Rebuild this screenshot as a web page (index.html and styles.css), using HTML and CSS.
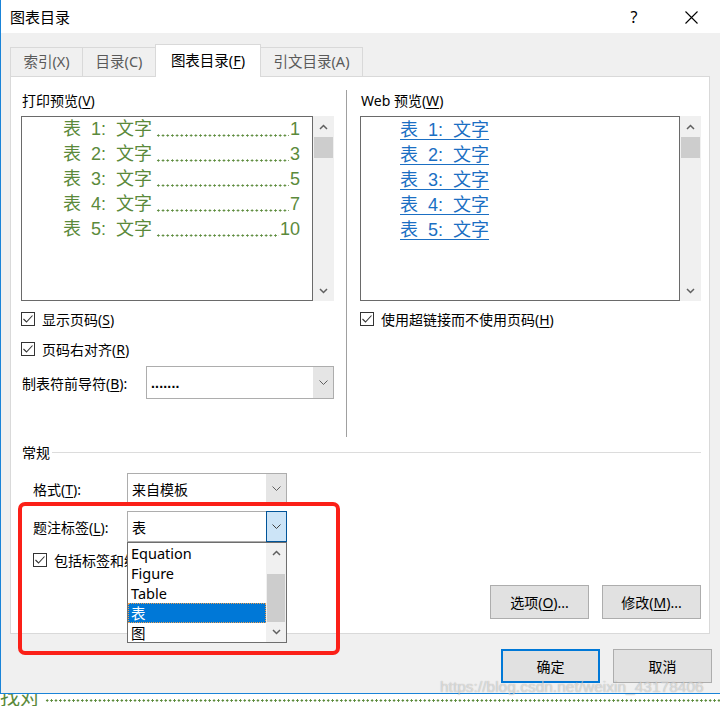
FILE: index.html
```html
<!DOCTYPE html>
<html lang="zh-CN">
<head>
<meta charset="utf-8">
<title>图表目录</title>
<link rel="stylesheet" href="styles.css">
</head>
<body>
<div class="window">
  <div class="titlebar">
    <span class="title">图表目录</span>
    <span class="help">?</span>
    <span class="close"><svg width="13" height="13" viewBox="0 0 13 13"><path d="M0.5 0.5L12.5 12.5M12.5 0.5L0.5 12.5" stroke="#000" stroke-width="1.1" fill="none"/></svg></span>
  </div>
  <div class="body">
    <div class="tabs">
      <div class="tab t1">索引(X)</div>
      <div class="tab t2">目录(C)</div>
      <div class="tab t3 active">图表目录(<u>F</u>)</div>
      <div class="tab t4">引文目录(A)</div>
    </div>
    <div class="panel">
      <div class="top">
        <div class="col col-left">
          <div class="label">打印预览(<u>V</u>)</div>
          <div class="preview">
            <div class="preview-box print">
              <div class="pline"><span class="ptext">表&nbsp;&nbsp;1:&nbsp;&nbsp;文字</span><span class="leader"></span><span class="pnum">1</span></div>
              <div class="pline"><span class="ptext">表&nbsp;&nbsp;2:&nbsp;&nbsp;文字</span><span class="leader"></span><span class="pnum">3</span></div>
              <div class="pline"><span class="ptext">表&nbsp;&nbsp;3:&nbsp;&nbsp;文字</span><span class="leader"></span><span class="pnum">5</span></div>
              <div class="pline"><span class="ptext">表&nbsp;&nbsp;4:&nbsp;&nbsp;文字</span><span class="leader"></span><span class="pnum">7</span></div>
              <div class="pline"><span class="ptext">表&nbsp;&nbsp;5:&nbsp;&nbsp;文字</span><span class="leader"></span><span class="pnum">10</span></div>
            </div>
            <div class="vscroll">
              <div class="arrow"><svg width="9" height="6" viewBox="0 0 9 6"><path d="M1 5L4.5 1.5L8 5" stroke="#606060" stroke-width="1.5" fill="none"/></svg></div>
              <div class="thumb"></div>
              <div class="track"></div>
              <div class="arrow"><svg width="9" height="6" viewBox="0 0 9 6"><path d="M1 1L4.5 4.5L8 1" stroke="#606060" stroke-width="1.5" fill="none"/></svg></div>
            </div>
          </div>
          <div class="check first"><span class="box"><svg width="12" height="12" viewBox="0 0 12 12"><path d="M1.5 6L4.5 9L10.5 2.5" stroke="#333" stroke-width="1.1" fill="none"/></svg></span><span>显示页码(<u>S</u>)</span></div>
          <div class="check second"><span class="box"><svg width="12" height="12" viewBox="0 0 12 12"><path d="M1.5 6L4.5 9L10.5 2.5" stroke="#333" stroke-width="1.1" fill="none"/></svg></span><span>页码右对齐(<u>R</u>)</span></div>
          <div class="field">
            <span class="field-label">制表符前导符(<u>B</u>):</span>
            <div class="combo wide">
              <span class="combo-text dots">.......</span>
              <span class="combo-btn"><svg width="9" height="5" viewBox="0 0 9 5"><path d="M0.5 0.5L4.5 4.5L8.5 0.5" stroke="#606060" stroke-width="1" fill="none"/></svg></span>
            </div>
          </div>
        </div>
        <div class="sep"></div>
        <div class="col col-right">
          <div class="label">Web 预览(<u>W</u>)</div>
          <div class="preview">
            <div class="preview-box web">
              <div class="wline"><a class="wlink">表&nbsp;&nbsp;1:&nbsp;&nbsp;文字</a></div>
              <div class="wline"><a class="wlink">表&nbsp;&nbsp;2:&nbsp;&nbsp;文字</a></div>
              <div class="wline"><a class="wlink">表&nbsp;&nbsp;3:&nbsp;&nbsp;文字</a></div>
              <div class="wline"><a class="wlink">表&nbsp;&nbsp;4:&nbsp;&nbsp;文字</a></div>
              <div class="wline"><a class="wlink">表&nbsp;&nbsp;5:&nbsp;&nbsp;文字</a></div>
            </div>
            <div class="vscroll">
              <div class="arrow"><svg width="9" height="6" viewBox="0 0 9 6"><path d="M1 5L4.5 1.5L8 5" stroke="#606060" stroke-width="1.5" fill="none"/></svg></div>
              <div class="thumb"></div>
              <div class="track"></div>
              <div class="arrow"><svg width="9" height="6" viewBox="0 0 9 6"><path d="M1 1L4.5 4.5L8 1" stroke="#606060" stroke-width="1.5" fill="none"/></svg></div>
            </div>
          </div>
          <div class="check first"><span class="box"><svg width="12" height="12" viewBox="0 0 12 12"><path d="M1.5 6L4.5 9L10.5 2.5" stroke="#333" stroke-width="1.1" fill="none"/></svg></span><span>使用超链接而不使用页码(<u>H</u>)</span></div>
        </div>
      </div>
      <div class="general">
        <div class="group-head"><span>常规</span><span class="group-line"></span></div>
        <div class="frow format-row">
          <span class="frow-label">格式(<u>T</u>):</span>
          <div class="combo narrow">
            <span class="combo-text">来自模板</span>
            <span class="combo-btn"><svg width="9" height="5" viewBox="0 0 9 5"><path d="M0.5 0.5L4.5 4.5L8.5 0.5" stroke="#606060" stroke-width="1" fill="none"/></svg></span>
          </div>
        </div>
        <div class="frow caption-row">
          <span class="frow-label">题注标签(<u>L</u>):</span>
          <div class="combo narrow">
            <span class="combo-text">表</span>
            <span class="combo-btn hot"><svg width="9" height="5" viewBox="0 0 9 5"><path d="M0.5 0.5L4.5 4.5L8.5 0.5" stroke="#404040" stroke-width="1" fill="none"/></svg></span>
            <div class="droplist">
              <div class="items">
                <div class="item">Equation</div>
                <div class="item">Figure</div>
                <div class="item">Table</div>
                <div class="item selected">表</div>
                <div class="item">图</div>
              </div>
              <div class="lscroll">
                <div class="larrow"><svg width="9" height="6" viewBox="0 0 9 6"><path d="M1 5L4.5 1.5L8 5" stroke="#606060" stroke-width="1.5" fill="none"/></svg></div>
                <div class="ltrack"></div>
                <div class="lthumb"></div>
                <div class="larrow"><svg width="9" height="6" viewBox="0 0 9 6"><path d="M1 1L4.5 4.5L8 1" stroke="#606060" stroke-width="1.5" fill="none"/></svg></div>
              </div>
            </div>
          </div>
        </div>
        <div class="check incl"><span class="box"><svg width="12" height="12" viewBox="0 0 12 12"><path d="M1.5 6L4.5 9L10.5 2.5" stroke="#333" stroke-width="1.1" fill="none"/></svg></span><span>包括标签和编号(<u>N</u>)</span></div>
        <div class="btn-row">
          <div class="btn">选项(<u>O</u>)...</div>
          <div class="btn">修改(<u>M</u>)...</div>
        </div>
      </div>
    </div>
    <div class="footer">
      <div class="btn primary">确定</div>
      <div class="btn">取消</div>
    </div>
  </div>
</div>
<div class="below"><span class="below-text">找对</span><span class="below-dots"></span></div>
<div class="annot"></div>
<div class="watermark">https://blog.csdn.net/weixin_43178406</div>
</body>
</html>
```

FILE: styles.css
```css
* { box-sizing: border-box; }
html, body { margin: 0; padding: 0; }
body {
  width: 720px;
  height: 706px;
  overflow: hidden;
  position: relative;
  background: #fff;
  font-family: "Noto Sans", "Noto Sans CJK SC", sans-serif;
  font-size: 14px;
  color: #000;
}
u { text-decoration: underline; text-underline-offset: 2px; }

.window {
  position: relative;
  height: 694px;
  border-left: 1px solid #1a84d8;
  border-bottom: 1px solid #1a84d8;
  display: flex;
  flex-direction: column;
}
.titlebar {
  height: 33px;
  flex: none;
  background: #fff;
  display: flex;
  align-items: center;
  padding-left: 9px;
}
.title { flex: 1; font-size: 15px; line-height: 20px; font-family: "Noto Sans CJK SC", sans-serif; }
.help { width: 16px; text-align: center; font-size: 16px; line-height: 20px; margin-right: 43px; font-family: "Noto Sans", sans-serif; }
.close { width: 13px; height: 13px; display: flex; margin-right: 22px; margin-top: 2px; }

.body {
  flex: 1;
  background: #f0f0f0;
  padding: 11px 10px 0 9px;
  display: flex;
  flex-direction: column;
}
.tabs {
  height: 32px;
  display: flex;
  align-items: flex-end;
  position: relative;
  z-index: 2;
}
.tab {
  height: 29px;
  border: 1px solid #d9d9d9;
  border-bottom: none;
  background: #f0f0f0;
  color: #5a5a5a;
  text-align: center;
  line-height: 27px;
  font-size: 14.5px;
}
.tab + .tab { margin-left: -1px; }
.t1 { width: 73px; }
.t2 { width: 74px; }
.t3 { width: 106px; }
.t4 { width: 103px; }
.tab.active {
  height: 33px;
  margin-bottom: -1px;
  background: #fff;
  color: #000;
  line-height: 31px;
  position: relative;
  z-index: 3;
}

.panel {
  width: 700px;
  height: 558px;
  flex: none;
  border: 1px solid #d9d9d9;
  background: #fff;
  padding: 0 8px 0 10px;
  display: flex;
  flex-direction: column;
}
.top { display: flex; height: 360px; flex: none; }
.col { padding-top: 14px; display: flex; flex-direction: column; min-width: 0; }
.col-left { width: 313px; flex: none; }
.col-right { width: 341px; flex: none; }
.sep { width: 1px; flex: none; background: #a0a0a0; margin: 13px 13px 0 12px; }
.label { height: 20px; line-height: 20px; padding-left: 1px; }

.preview { display: flex; height: 185px; margin-top: 5px; min-width: 0; }
.preview-box { flex: 1; min-width: 0; overflow: hidden; border: 1px solid #6a6a6a; background: #fff; }
.preview-box.print { padding: 0 12px 0 41px; }
.preview-box.web { padding: 0 0 0 39px; }
.pline, .wline {
  height: 25px;
  line-height: 25px;
  display: flex;
  align-items: baseline;
  font-family: "Liberation Sans", "Noto Sans CJK SC", sans-serif;
  font-size: 18px;
  white-space: nowrap;
  min-width: 0;
}
.pline { color: #5b8a3b; }
.ptext { flex: none; margin-top: -1px; }
.leader {
  flex: 1;
  min-width: 0;
  align-self: stretch;
  margin: 0 1px 0 4px;
  background-image: radial-gradient(circle, #5b8a3b 0.9px, transparent 1.3px);
  background-size: 4.7px 3px;
  background-repeat: repeat-x;
  background-position: 0 17px;
}
.pnum { flex: none; }
.wlink { color: #1b6fc3; text-decoration: underline; text-underline-offset: 3px; text-decoration-thickness: 1px; margin-top: 1px; }

.vscroll { width: 21px; flex: none; background: #f0f0f0; display: flex; flex-direction: column; }
.arrow { height: 21px; display: flex; align-items: center; justify-content: center; }
.thumb { height: 21px; background: #cdcdcd; margin: 0 1px; }
.track { flex: 1; }

.check { display: flex; align-items: center; height: 20px; }
.check.first { margin-top: 8px; }
.check.second { margin-top: 10px; }
.box {
  width: 14px; height: 14px;
  border: 1px solid #333;
  background: #fff;
  margin-right: 7px;
  display: flex; align-items: center; justify-content: center;
  flex: none;
}

.field { display: flex; align-items: center; margin-top: 7px; }
.field-label { width: 125px; padding-left: 1px; }
.combo {
  position: relative;
  display: flex;
  border: 1px solid #adadad;
  background: #fff;
}
.combo.wide { width: 188px; height: 33px; }
.combo.narrow { width: 160px; height: 31px; }
.combo-text { flex: 1; padding-left: 4px; display: flex; align-items: center; }
.combo-text.dots { font-family: "Liberation Sans", sans-serif; font-weight: bold; letter-spacing: 0.2px; }
.combo-btn {
  width: 20px;
  background: #e5e5e5;
  display: flex; align-items: center; justify-content: center;
}
.combo-btn.hot { background: #cce4f7; border: 1px solid #005499; margin: -1px -1px -1px 0; width: 21px; }

.general { display: flex; flex-direction: column; padding-left: 1px; }
.group-head { display: flex; align-items: center; height: 20px; margin-top: 5px; }
.group-line { flex: 1; height: 1px; background: #dcdcdc; margin-left: 2px; }
.frow { display: flex; align-items: center; padding-left: 11px; }
.format-row { margin-top: 11px; }
.caption-row { margin-top: 7px; position: relative; z-index: 5; }
.frow-label { width: 94px; }

.droplist {
  position: absolute;
  top: 30px;
  left: -1px;
  width: 160px;
  height: 101px;
  border: 1px solid #6e6e6e;
  background: #fff;
  display: flex;
}
.items { flex: 1; }
.item { height: 20px; line-height: 20px; padding-left: 3px; font-size: 14.5px; }
.item.selected { background: #0078d7; color: #fff; outline: 1px dotted #f0a050; outline-offset: -1px; }
.lscroll { width: 20px; background: #f0f0f0; display: flex; flex-direction: column; }
.larrow { height: 20px; display: flex; align-items: center; justify-content: center; }
.ltrack { height: 11px; }
.lthumb { flex: 1; background: #cdcdcd; margin: 0 1px; }

.check.incl { margin-top: 8px; padding-left: 11px; }

.btn-row { display: flex; justify-content: flex-end; gap: 13px; margin-top: 15px; }
.btn {
  width: 99px; height: 34px;
  border: 1px solid #adadad;
  background: #e1e1e1;
  display: flex; align-items: center; justify-content: center;
}
.btn.primary { border: 2px solid #0078d7; }
.footer { display: flex; justify-content: flex-end; gap: 13px; margin-top: 15px; margin-right: -2px; }

.below { height: 12px; position: relative; overflow: hidden; display: flex; }
.below-text {
  color: #5b8a3b;
  font-family: "Noto Sans CJK SC", sans-serif;
  font-size: 20px;
  line-height: 20px;
  margin-top: -7px;
  width: 45px;
}
.below-dots {
  flex: 1;
  height: 3px;
  margin-top: 5px;
  background-image: radial-gradient(circle, #5b8a3b 1px, transparent 1.3px);
  background-size: 4.4px 3px;
}

.annot {
  position: absolute;
  left: 18px; top: 502px;
  width: 322px; height: 153px;
  border: 4px solid #fb2018;
  border-radius: 7px;
  z-index: 10;
}
.watermark {
  position: absolute;
  left: 440px; top: 678px;
  font-family: "Liberation Sans", sans-serif;
  font-size: 15.5px;
  color: rgba(255,255,255,0.55);
  text-shadow: 0 0 1px rgba(0,0,0,0.35);
  z-index: 11;
  white-space: nowrap;
}
```
